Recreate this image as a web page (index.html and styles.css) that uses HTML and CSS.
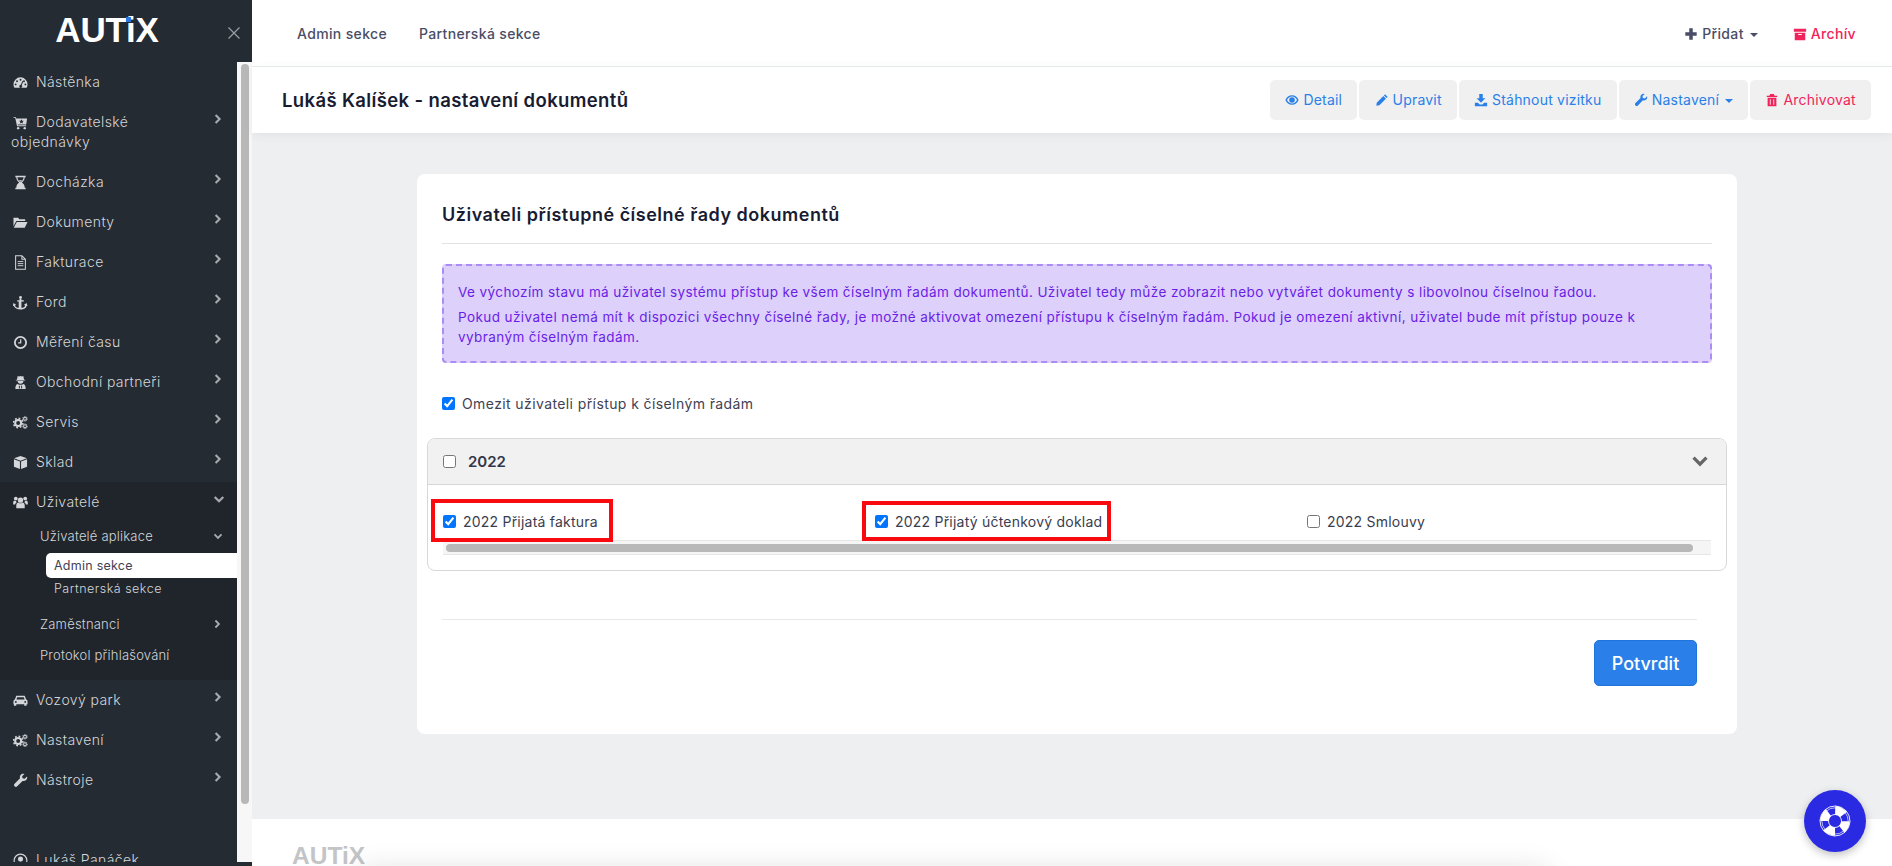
FILE: index.html
```html
<!DOCTYPE html>
<html lang="cs">
<head>
<meta charset="utf-8">
<title>AUTiX</title>
<link rel="stylesheet" href="styles.css">
</head>
<body>
<svg class="defs" width="0" height="0" aria-hidden="true">
  <symbol id="i-gauge" viewBox="0 0 16 16"><path fill-rule="evenodd" d="M8 2.500A7.500 7.500 0 0 0 .5 10c0 1.400.4 2.600 1 3.500h13c.6-.9 1-2.100 1-3.500A7.500 7.500 0 0 0 8 2.500zM8 4a1 1 0 1 1 0 2 1 1 0 0 1 0-2zM4.300 5.600a1 1 0 1 1 0 2 1 1 0 0 1 0-2zM2.800 9a1 1 0 1 1 0 2 1 1 0 0 1 0-2zM13.200 9a1 1 0 1 1 0 2 1 1 0 0 1 0-2zM11.700 5.600a1 1 0 1 1 0 2 1 1 0 0 1 0-2zM10 6.500l.9.4-1.600 4a1.500 1.500 0 1 1-.9-.4z"/></symbol>
  <symbol id="i-cart" viewBox="0 0 16 16"><path d="M.5 2.500h2.600l.3 1.100H15l-.9 6.400H5l.2 1H14v1H4.300L2.400 3.300H.5z"/><circle cx="5.500" cy="14" r="1.300"/><circle cx="12.500" cy="14" r="1.300"/><path fill="#252b33" d="M9 4.400l.8 1.600 1.700.2-1.300 1.200.4 1.700L9 8.300l-1.600.8.400-1.700-1.300-1.200 1.700-.2z"/></symbol>
  <symbol id="i-hourglass" viewBox="0 0 16 16"><path fill-rule="evenodd" d="M2.500 .8h11v1.700h-1c0 2.700-1.400 4.300-3 5.500 1.600 1.200 3 2.800 3 5.500h1v1.700h-11v-1.700h1c0-2.700 1.400-4.300 3-5.500-1.600-1.200-3-2.800-3-5.500h-1zM4.700 2.500c0 2.500 1.500 4 3.300 5 1.800-1 3.300-2.500 3.300-5z"/><path d="M6 5.500h4L8 7.300z"/></symbol>
  <symbol id="i-folder" viewBox="0 0 16 16"><path d="M.5 3h5l1.200 1.500H13V6.500H3.500L.5 12z"/><path d="M4 7.500h11.500L12.500 13.500H.8z"/></symbol>
  <symbol id="i-file" viewBox="0 0 16 16"><path fill="none" stroke="currentColor" stroke-width="1.100" d="M2.800 .8h6.700l3.700 3.700V15.200H2.800zM9.500 .8v3.700h3.700"/><path fill="none" stroke="currentColor" d="M5 7h6M5 9.200h6M5 11.400h6"/></symbol>
  <symbol id="i-anchor" viewBox="0 0 16 16"><circle cx="8" cy="2.500" r="1.500"/><path d="M7 3.500h2v10.200c2-.2 3.500-1.200 4-2.600l-1.300-.6 2.800-2 .9 3.300-1.100-.3C14.500 14 11.500 15.500 8 15.500S1.500 14 .7 11.500l-1 .3.8-3.300 2.800 2-1.200.6c.5 1.400 2 2.400 4 2.600V7H4.500V5.500H7z"/><path d="M7 5.500h4.500V7H7z"/></symbol>
  <symbol id="i-clock" viewBox="0 0 16 16"><circle cx="8" cy="8" r="6" fill="none" stroke="currentColor" stroke-width="1.900"/><path fill="none" stroke="currentColor" stroke-width="1.300" d="M8.200 4.500v4H5.500"/></symbol>
  <symbol id="i-secret" viewBox="0 0 16 16"><path d="M5 1l1.500.5L8 1.100l1.500.4L11 1l.8 4H13v.8H3V5h1.200z"/><path d="M4.800 6.500h6.400c-.2 1.600-1.400 2.800-3.200 2.800S5 8.100 4.800 6.500z"/><path d="M2.500 15c0-3 .6-5 2.500-5.500.8.600 1.800 1 3 1s2.200-.4 3-1c1.900.5 2.500 2.500 2.500 5.500z"/><path fill="#252b33" d="M6.300 11.500h1v3h-1zM8.700 11.500h1v3h-1z"/></symbol>
  <symbol id="i-cogs" viewBox="0 0 16 16"><circle cx="5.500" cy="8.500" r="3.200" fill="none" stroke="currentColor" stroke-width="2.200"/><circle cx="5.500" cy="8.500" r="5" fill="none" stroke="currentColor" stroke-width="1.600" stroke-dasharray="1.900 2"/><circle cx="12.800" cy="4" r="1.500" fill="none" stroke="currentColor" stroke-width="1.100"/><circle cx="12.800" cy="4" r="2.500" fill="none" stroke="currentColor" stroke-width="1" stroke-dasharray="1 1"/><circle cx="12.800" cy="12" r="1.500" fill="none" stroke="currentColor" stroke-width="1.100"/><circle cx="12.800" cy="12" r="2.500" fill="none" stroke="currentColor" stroke-width="1" stroke-dasharray="1 1"/></symbol>
  <symbol id="i-cube" viewBox="0 0 16 16"><path d="M8 1l6.800 2.500L8 6 1.200 3.500zM1 4.600l6.400 2.400v8L1 12.400zM15 4.600L8.600 7v8l6.400-2.600z"/></symbol>
  <symbol id="i-users" viewBox="0 0 16 16"><circle cx="8" cy="5.500" r="2.800"/><circle cx="3" cy="3.800" r="2"/><circle cx="13" cy="3.800" r="2"/><path d="M3.500 14V11c0-1.800 1.200-3 2.300-3 .6.600 1.300.9 2.200.9s1.600-.3 2.200-.9c1.100 0 2.300 1.200 2.300 3v3zM.2 10V8c0-1.300.7-2.200 1.600-2.200.4.400.8.600 1.300.6.200.6.500 1 .9 1.400-1 .6-1.600 1.300-1.800 2.200zM15.800 10V8c0-1.300-.7-2.200-1.600-2.200-.4.400-.8.600-1.300.6-.2.600-.5 1-.9 1.400 1 .6 1.600 1.300 1.800 2.200z"/></symbol>
  <symbol id="i-car" viewBox="0 0 16 16"><path fill-rule="evenodd" d="M3.500 3h9l1.500 3.800c1 .4 1.500 1.100 1.500 2V12h-1v1.500h-2.500V12h-8.500v1.500H1V12H.5V8.800c0-.9.500-1.600 1.500-2zM4.500 4.500L3.600 6.800h8.800l-.9-2.300zM3 8.500a1 1 0 1 0 0 2 1 1 0 0 0 0-2zM13 8.500a1 1 0 1 0 0 2 1 1 0 0 0 0-2z"/></symbol>
  <symbol id="i-wrench" viewBox="0 0 16 16"><path d="M15 3.700c.4 1.700-.1 3.200-1.300 4.100-1 .8-2.300 1-3.500.6L4.500 14.200c-.8.800-2 .8-2.800 0-.8-.8-.8-2 0-2.800L7.500 5.700c-.4-1.200-.2-2.500.6-3.500C9 1 10.600.6 12.200 1L9.700 3.500l.5 2.200 2.200.5z"/></symbol>
  <symbol id="i-user" viewBox="0 0 16 16"><circle cx="8" cy="8" r="6.800" fill="none" stroke="currentColor" stroke-width="1.200"/><circle cx="8" cy="6.500" r="2.700"/><path d="M3.500 12.500c.5-1.800 2-2.700 4.500-2.700s4 .9 4.500 2.700C11 14 9.500 14.500 8 14.500s-3-.5-4.500-2z"/></symbol>
  <symbol id="i-chev-r" viewBox="0 0 10 14"><path fill="none" stroke="currentColor" stroke-width="2.600" d="M2 2l5 5-5 5"/></symbol>
  <symbol id="i-chev-d" viewBox="0 0 14 10"><path fill="none" stroke="currentColor" stroke-width="2.600" d="M2 2l5 5 5-5"/></symbol>
  <symbol id="i-plus" viewBox="0 0 16 16"><path d="M6 1.500h4V6h4.500v4H10v4.500H6V10H1.500V6H6z"/></symbol>
  <symbol id="i-box" viewBox="0 0 16 16"><path fill-rule="evenodd" d="M1 2h14v3.500H1zM2 6.500h12V15H2zM6 8v1.200h4V8z"/></symbol>
  <symbol id="i-eye" viewBox="0 0 16 16"><path fill-rule="evenodd" d="M8 2.500c3.500 0 6.300 2.200 7.500 5.500-1.200 3.300-4 5.500-7.500 5.500S1.700 11.300.5 8C1.700 4.700 4.500 2.500 8 2.500zM8 4C5.600 4 3.500 5.500 2.300 8c1.200 2.500 3.300 4 5.700 4s4.500-1.500 5.700-4C12.500 5.500 10.400 4 8 4zM8 4.800a3.200 3.200 0 1 1 0 6.400 3.200 3.200 0 0 1 0-6.400z"/></symbol>
  <symbol id="i-pencil" viewBox="0 0 16 16"><path d="M11.500 1.500l3 3-1.300 1.300-3-3zM9.500 3.500l3 3L5 14l-3.500.5L2 11z"/></symbol>
  <symbol id="i-download" viewBox="0 0 16 16"><path d="M6 1h4v5h3l-5 5-5-5h3zM1 11h3.500l2 2h3l2-2H15v4H1z"/></symbol>
  <symbol id="i-trash" viewBox="0 0 16 16"><path fill-rule="evenodd" d="M6 1h4l1 2h3v1.500H2V3h3zM3 5.500h10V15H3zM5.500 7v6.500h1V7zM9.500 7v6.500h1V7z"/></symbol>
  <symbol id="i-buoy" viewBox="0 0 32 32"><g transform="rotate(25 16 16)" fill="none" stroke="#fff"><circle cx="16" cy="16" r="15" stroke-width=".8"/><circle cx="16" cy="16" r="13.200" stroke-width=".6"/><circle cx="16" cy="16" r="6.500" stroke-width=".8"/><circle cx="16" cy="16" r="10.500" stroke-width="8.500" stroke-dasharray="9.500 7" stroke-dashoffset="4.750"/></g></symbol>
</svg>

<aside class="sidebar">
  <div class="brand">
    <span class="logo">AUTiX<span class="logo-dot"></span></span>
    <svg class="close" viewBox="0 0 12 12"><path d="M.5.5l11 11M11.500.5l-11 11"/></svg>
  </div>
  <div class="sidebar-body">
    <nav class="nav">
      <a class="nav-item"><svg class="nav-icon"><use href="#i-gauge"/></svg>Nástěnka</a>
      <a class="nav-item"><svg class="nav-chev"><use href="#i-chev-r"/></svg><svg class="nav-icon"><use href="#i-cart"/></svg>Dodavatelské<br>objednávky</a>
      <a class="nav-item"><svg class="nav-chev"><use href="#i-chev-r"/></svg><svg class="nav-icon"><use href="#i-hourglass"/></svg>Docházka</a>
      <a class="nav-item"><svg class="nav-chev"><use href="#i-chev-r"/></svg><svg class="nav-icon"><use href="#i-folder"/></svg>Dokumenty</a>
      <a class="nav-item"><svg class="nav-chev"><use href="#i-chev-r"/></svg><svg class="nav-icon"><use href="#i-file"/></svg>Fakturace</a>
      <a class="nav-item"><svg class="nav-chev"><use href="#i-chev-r"/></svg><svg class="nav-icon"><use href="#i-anchor"/></svg>Ford</a>
      <a class="nav-item"><svg class="nav-chev"><use href="#i-chev-r"/></svg><svg class="nav-icon"><use href="#i-clock"/></svg>Měření času</a>
      <a class="nav-item"><svg class="nav-chev"><use href="#i-chev-r"/></svg><svg class="nav-icon"><use href="#i-secret"/></svg>Obchodní partneři</a>
      <a class="nav-item"><svg class="nav-chev"><use href="#i-chev-r"/></svg><svg class="nav-icon"><use href="#i-cogs"/></svg>Servis</a>
      <a class="nav-item"><svg class="nav-chev"><use href="#i-chev-r"/></svg><svg class="nav-icon"><use href="#i-cube"/></svg>Sklad</a>
      <div class="nav-open">
        <a class="nav-item"><svg class="nav-chev nav-chev-down"><use href="#i-chev-d"/></svg><svg class="nav-icon"><use href="#i-users"/></svg>Uživatelé</a>
        <a class="sub-item sub-first"><svg class="sub-chev sub-chev-down"><use href="#i-chev-d"/></svg>Uživatelé aplikace</a>
        <a class="leaf leaf-active">Admin sekce</a>
        <a class="leaf">Partnerská sekce</a>
        <a class="sub-item sub-gap"><svg class="sub-chev"><use href="#i-chev-r"/></svg>Zaměstnanci</a>
        <a class="sub-item sub-last">Protokol přihlašování</a>
      </div>
      <a class="nav-item"><svg class="nav-chev"><use href="#i-chev-r"/></svg><svg class="nav-icon"><use href="#i-car"/></svg>Vozový park</a>
      <a class="nav-item"><svg class="nav-chev"><use href="#i-chev-r"/></svg><svg class="nav-icon"><use href="#i-cogs"/></svg>Nastavení</a>
      <a class="nav-item"><svg class="nav-chev"><use href="#i-chev-r"/></svg><svg class="nav-icon"><use href="#i-wrench"/></svg>Nástroje</a>
      <a class="nav-item nav-user"><svg class="nav-icon"><use href="#i-user"/></svg>Lukáš Panáček</a>
    </nav>
    <div class="side-scroll"><div class="side-thumb"></div></div>
  </div>
</aside>

<div class="main">
  <header class="topbar">
    <nav class="top-links">
      <a>Admin sekce</a>
      <a>Partnerská sekce</a>
    </nav>
    <div class="top-actions">
      <a class="top-add"><svg class="ico"><use href="#i-plus"/></svg>Přidat<span class="caret"></span></a>
      <a class="top-archive"><svg class="ico"><use href="#i-box"/></svg>Archív</a>
    </div>
  </header>
  <div class="subheader">
    <h1 class="page-title">Lukáš Kalíšek - nastavení dokumentů</h1>
    <div class="toolbar">
      <a class="tool"><svg class="ico"><use href="#i-eye"/></svg>Detail</a>
      <a class="tool"><svg class="ico"><use href="#i-pencil"/></svg>Upravit</a>
      <a class="tool"><svg class="ico"><use href="#i-download"/></svg>Stáhnout vizitku</a>
      <a class="tool"><svg class="ico"><use href="#i-wrench"/></svg>Nastavení<span class="caret"></span></a>
      <a class="tool tool-danger"><svg class="ico"><use href="#i-trash"/></svg>Archivovat</a>
    </div>
  </div>
  <main class="content">
    <section class="card">
      <h2 class="card-title">Uživateli přístupné číselné řady dokumentů</h2>
      <div class="alert">
        <p>Ve výchozím stavu má uživatel systému přístup ke všem číselným řadám dokumentů. Uživatel tedy může zobrazit nebo vytvářet dokumenty s libovolnou číselnou řadou.</p>
        <p>Pokud uživatel nemá mít k dispozici všechny číselné řady, je možné aktivovat omezení přístupu k číselným řadám. Pokud je omezení aktivní, uživatel bude mít přístup pouze k vybraným číselným řadám.</p>
      </div>
      <label class="limit"><input type="checkbox" checked>Omezit uživateli přístup k číselným řadám</label>
      <div class="panel">
        <div class="panel-head">
          <label class="panel-year"><input type="checkbox">2022</label>
          <svg class="panel-chev"><use href="#i-chev-d"/></svg>
        </div>
        <div class="panel-body">
          <div class="series">
            <label class="series-item"><input type="checkbox" checked>2022 Přijatá faktura</label>
            <label class="series-item"><input type="checkbox" checked>2022 Přijatý účtenkový doklad</label>
            <label class="series-item"><input type="checkbox">2022 Smlouvy</label>
          </div>
          <div class="hscroll"><div class="hthumb"></div></div>
          <div class="mark mark-a"></div>
          <div class="mark mark-b"></div>
        </div>
      </div>
      <div class="card-foot">
        <button class="submit" type="button">Potvrdit</button>
      </div>
    </section>
  </main>
  <footer class="footer">
    <span class="foot-logo">AUTiX</span>
    <div class="foot-shade"></div>
  </footer>
</div>
<a class="fab"><svg><use href="#i-buoy"/></svg></a>
</body>
</html>
```
FILE: styles.css
```css
* { box-sizing: border-box; }
html, body { height: 100%; }
body {
  margin: 0;
  display: flex;
  height: 866px;
  overflow: hidden;
  font-family: Inter, "Liberation Sans", sans-serif;
  font-size: 14px;
  color: #3f4254;
  background: #fff;
}
.defs { position: absolute; }
a { color: inherit; text-decoration: none; }

/* sidebar */
.sidebar {
  width: 252px;
  flex: none;
  height: 866px;
  background: #252b33;
  color: #d4d6d9;
  overflow: hidden;
}
.brand {
  position: relative;
  height: 62px;
  display: flex;
  justify-content: center;
  padding-right: 38px;
  padding-top: 11px;
}
.logo {
  position: relative;
  font-family: "Liberation Sans", sans-serif;
  font-weight: 700;
  font-size: 35px;
  line-height: 38px;
  height: 38px;
  color: #fff;
  letter-spacing: -.2px;
}
.logo-dot {
  position: absolute;
  left: 71px;
  top: 6px;
  width: 5px;
  height: 5px;
  background: #2a78e4;
}
.close {
  position: absolute;
  left: 228px;
  top: 27px;
  width: 12px;
  height: 12px;
  fill: none;
  stroke: #9b9ea3;
  stroke-width: 1.2;
}
.sidebar-body { display: flex; height: 800px; }
.nav { width: 237px; flex: none; overflow: hidden; }
.nav-item {
  display: block;
  padding: 10px 15px 10px 11px;
  line-height: 20px;
  font-weight: 300;
  font-size: 14px;
  letter-spacing: .4px;
}
.nav-icon {
  display: inline-block;
  width: 15px;
  height: 15px;
  margin: 0 8px 0 2px;
  vertical-align: -3px;
  fill: currentColor;
}
.nav-chev {
  float: right;
  width: 8px;
  height: 12px;
  margin-top: 1px;
  color: #a9abaf;
  fill: none;
}
.nav-chev-down { width: 12px; height: 9px; margin-top: 3px; margin-right: -3px; }
.nav-open { background: #20252c; height: 198px; }
.sub-item {
  display: block;
  padding-left: 40px;
  padding-right: 15px;
  font-size: 13px;
  font-weight: 300;
  line-height: 28px;
  letter-spacing: .2px;
}
.sub-first { height: 31px; }
.sub-gap { margin-top: 10px; height: 31px; }
.sub-last { height: 28px; }
.sub-chev { float: right; width: 7px; height: 10px; margin-top: 9px; margin-right: 1px; color: #a9abaf; }
.sub-chev-down { width: 10px; height: 7px; margin-top: 11px; margin-right: -1px; }
.leaf {
  display: block;
  margin-left: 46px;
  padding-left: 8px;
  height: 25px;
  line-height: 25px;
  font-size: 12.500px;
  font-weight: 300;
  letter-spacing: .5px;
}
.leaf + .leaf { height: 22px; line-height: 22px; }
.leaf-active {
  background: #fff;
  color: #3f4254;
  font-weight: 400;
  letter-spacing: .25px;
  border-radius: 5px 0 0 5px;
}
.nav-user { margin-top: 40px; }
.side-scroll {
  width: 15px;
  flex: none;
  background: #f7f7f7;
  padding: 2px 3px 0 4px;
}
.side-thumb { height: 740px; background: #b8b8b8; border-radius: 4px; }

/* main */
.main { flex: 1; min-width: 0; display: flex; flex-direction: column; height: 866px; }
.topbar {
  height: 67px;
  flex: none;
  border-bottom: 1px solid #e8eef0;
  display: flex;
  align-items: center;
  justify-content: space-between;
  padding: 0 36px 0 45px;
  font-weight: 500;
  letter-spacing: .35px;
  color: #4a4d66;
}
.top-links { display: flex; gap: 32px; }
.top-actions { display: flex; gap: 35px; align-items: center; }
.top-add { color: #4a4d66; }
.top-archive { color: #f0245a; }
.ico {
  display: inline-block;
  width: 14px;
  height: 14px;
  margin-right: 4px;
  vertical-align: -2px;
  fill: currentColor;
}
.caret {
  display: inline-block;
  margin-left: 6px;
  vertical-align: 2px;
  border-left: 4px solid transparent;
  border-right: 4px solid transparent;
  border-top: 4px solid currentColor;
}
.subheader {
  height: 66px;
  flex: none;
  display: flex;
  align-items: center;
  justify-content: space-between;
  padding: 0 21px 0 30px;
  position: relative;
  box-shadow: 0 2px 10px rgba(0,0,0,.06);
}
.page-title { margin: 0; font-size: 18.500px; font-weight: 600; letter-spacing: .37px; color: #181c32; }
.toolbar { display: flex; gap: 2px; }
.tool {
  height: 40px;
  line-height: 40px;
  padding: 0 15.200px;
  background: #f0f0f0;
  border-radius: 5px;
  color: #2a80e8;
  letter-spacing: .2px;
  white-space: nowrap;
}
.tool-danger { color: #f0245a; }
.content { flex: 1; min-height: 0; background: #eeeff1; padding: 41px 155px 0 165px; }
.card { background: #fff; border-radius: 8px; height: 560px; padding: 0 25px; }
.card-title {
  margin: 0;
  padding: 29px 0 16px;
  font-size: 18px;
  line-height: 24px;
  font-weight: 600;
  letter-spacing: .5px;
  color: #181c32;
  border-bottom: 1px solid #e2e2e2;
}
.alert {
  margin-top: 20px;
  height: 99px;
  padding: 16px 14px;
  border: 2px dashed #ab8cf5;
  border-radius: 4px;
  background: #ddd0fa;
  color: #6a1de6;
  font-size: 13.500px;
  letter-spacing: .41px;
  line-height: 20px;
}
.alert p { margin: 0; }
.alert p + p { margin-top: 5px; }
.limit {
  display: flex;
  align-items: center;
  margin-top: 30px;
  height: 20px;
  font-size: 14px;
  letter-spacing: .4px;
}
input[type=checkbox] { margin: 0 7px 0 0; flex: none; width: 13px; height: 13px; }
.panel {
  margin: 25px -15px 0;
  height: 133px;
  border: 1px solid #d8d8d8;
  border-radius: 8px;
  overflow: hidden;
}
.panel-head {
  height: 46px;
  background: #f1f1f1;
  border-bottom: 1px solid #d6d6d6;
  display: flex;
  align-items: center;
  justify-content: space-between;
  padding: 0 17px 0 15px;
}
.panel-year { display: flex; align-items: center; font-size: 15px; font-weight: 600; color: #33364a; }
.panel-year input { margin-right: 12px; }
.panel-chev { width: 18px; height: 13px; color: #666; }
.panel-body { position: relative; padding: 0 15px; }
.series { display: grid; grid-template-columns: repeat(3, 432px); height: 55px; padding-top: 26px; overflow: hidden; }
.series-item { display: flex; align-items: center; height: 20px; font-size: 14px; letter-spacing: .22px; color: #3a3d4f; white-space: nowrap; }
.hscroll {
  height: 15px;
  background: #f5f5f5;
  border-top: 1px solid #e6e6e6;
  border-bottom: 1px solid #e6e6e6;
  padding: 3px 18px 0 3px;
}
.hthumb { height: 8px; background: #b8b8b8; border-radius: 4px; }
.mark { position: absolute; border: 4px solid #f80a0f; }
.mark-a { left: 3px; top: 14px; width: 182px; height: 43px; }
.mark-b { left: 434px; top: 16px; width: 249px; height: 40px; }
.card-foot {
  margin: 48px 15px 0 0;
  padding-top: 20px;
  border-top: 1px solid #e8e8e8;
  display: flex;
  justify-content: flex-end;
}
.submit {
  width: 103px;
  height: 46px;
  border: 1px solid #1f74dc;
  border-radius: 5px;
  background: #2a80e8;
  color: #fff;
  font: 500 18px Inter, "Liberation Sans", sans-serif;
}
.footer { height: 47px; flex: none; background: #fff; position: relative; overflow: hidden; padding: 22px 0 0 40px; }
.foot-logo { font-family: "Liberation Sans", sans-serif; font-weight: 700; font-size: 24.500px; line-height: 30px; color: #c3c4c6; }
.foot-shade {
  position: absolute;
  left: 116px;
  right: 354px;
  top: 62px;
  height: 30px;
  box-shadow: 0 0 30px 10px rgba(0,0,0,.14);
}
.fab {
  position: absolute;
  left: 1804px;
  top: 790px;
  width: 62px;
  height: 62px;
  border-radius: 50%;
  background: #2a2ae3;
  box-shadow: 0 3px 8px rgba(0,0,0,.25);
  display: flex;
  align-items: center;
  justify-content: center;
}
.fab svg { width: 32px; height: 32px; }
```
